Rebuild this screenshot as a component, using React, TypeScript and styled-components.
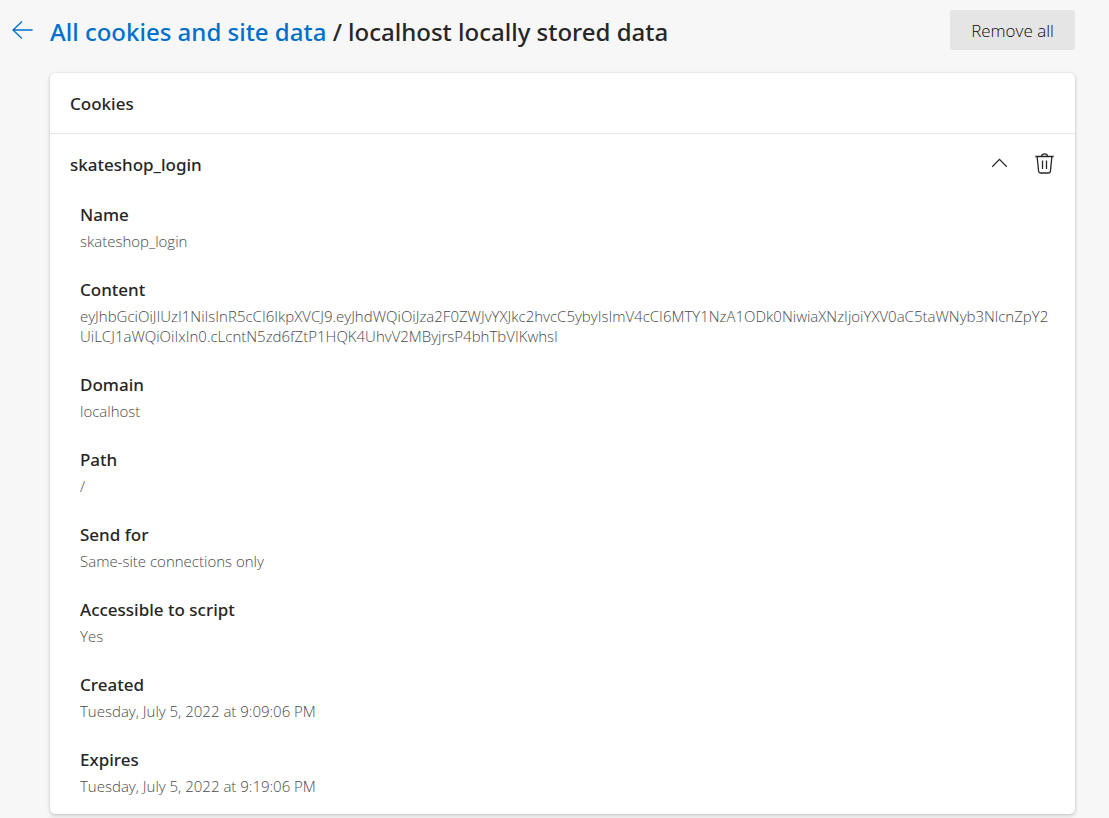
import React from 'react';
import styled, { createGlobalStyle } from 'styled-components';

const GlobalStyle = createGlobalStyle`
  *, *::before, *::after { box-sizing: border-box; }
  body {
    margin: 0;
    background: #f7f7f7;
    color: #262626;
    font-family: "Segoe UI", "Noto Sans", "Open Sans", sans-serif;
  }
`;

const Page = styled.main`
  padding: 10px 34px 4px 10px;
`;

const Header = styled.header`
  display: flex;
  align-items: center;
  height: 40px;
  margin-bottom: 23px;
`;

const BackLink = styled.a`
  display: flex;
  width: 40px;
  color: #0070cc;
`;

const Title = styled.h1`
  flex: 1;
  margin: 0;
  font-size: 24px;
  line-height: 32px;
  font-weight: 500;
  padding-top: 3px;
  white-space: nowrap;
`;

const TitleLink = styled.a`
  color: #0070cc;
  text-decoration: none;
`;

const RemoveButton = styled.button`
  height: 40px;
  min-width: 125px;
  padding: 2px 20px 0;
  border: 0;
  border-radius: 2px;
  background: #e5e5e5;
  color: #0a0a0a;
  font-family: "Segoe UI", "Open Sans", sans-serif;
  font-size: 17px;
  font-weight: 300;
  line-height: 24px;
`;

const Card = styled.section`
  margin-left: 40px;
  border-radius: 5px;
  background: #fff;
  box-shadow: 0 0 2px rgba(0, 0, 0, 0.14), 0 2px 4px rgba(0, 0, 0, 0.16);
`;

const CardHeading = styled.h2`
  margin: 0;
  padding: 19px 20px 17px;
  border-bottom: 1px solid #e8e8e8;
  font-size: 17px;
  line-height: 24px;
  font-weight: 500;
`;

const CookieRow = styled.div`
  display: flex;
  align-items: center;
  height: 60px;
  padding: 0 10px 0 20px;
`;

const CookieName = styled.h3`
  flex: 1;
  margin: 0;
  padding-top: 2px;
  font-size: 17px;
  line-height: 24px;
  font-weight: 500;
`;

const IconButton = styled.button`
  display: flex;
  align-items: center;
  justify-content: center;
  width: 40px;
  height: 40px;
  margin-left: 5px;
  padding: 0;
  border: 0;
  background: none;
  color: #262626;
`;

const Details = styled.dl`
  display: grid;
  gap: 27px;
  margin: 0;
  padding: 9px 20px 18px 30px;
`;

const Label = styled.dt`
  font-size: 17px;
  line-height: 24px;
  font-weight: 500;
`;

const Value = styled.dd`
  margin: 4px 0 0;
  color: #4a4a4a;
  font-family: "Segoe UI", "Open Sans", sans-serif;
  font-size: 15px;
  font-weight: 300;
  line-height: 20px;
  word-break: break-all;
`;

const fields = [
  { label: 'Name', value: 'skateshop_login' },
  {
    label: 'Content',
    value:
      'eyJhbGciOiJIUzI1NiIsInR5cCI6IkpXVCJ9.eyJhdWQiOiJza2F0ZWJvYXJkc2hvcC5ybyIsImV4cCI6MTY1NzA1ODk0NiwiaXNzIjoiYXV0aC5taWNyb3NlcnZpY2UiLCJ1aWQiOiIxIn0.cLcntN5zd6fZtP1HQK4UhvV2MByjrsP4bhTbVIKwhsI',
  },
  { label: 'Domain', value: 'localhost' },
  { label: 'Path', value: '/' },
  { label: 'Send for', value: 'Same-site connections only' },
  { label: 'Accessible to script', value: 'Yes' },
  { label: 'Created', value: 'Tuesday, July 5, 2022 at 9:09:06 PM' },
  { label: 'Expires', value: 'Tuesday, July 5, 2022 at 9:19:06 PM' },
];

const BackIcon = () => (
  <svg width="24" height="20" viewBox="0 0 24 20" fill="none" stroke="currentColor" strokeWidth="1.3" aria-hidden="true">
    <path d="M22.6 10H3M12 1.5L3 10L12 18.5" />
  </svg>
);

const ChevronUpIcon = () => (
  <svg width="16" height="12" viewBox="0 0 16 12" fill="none" stroke="currentColor" strokeWidth="1.3" aria-hidden="true">
    <path d="M0.2 8.8L7.5 1.4L14.8 8.8" />
  </svg>
);

const TrashIcon = () => (
  <svg width="20" height="22" viewBox="0 0 20 22" fill="none" stroke="currentColor" strokeWidth="1.3" aria-hidden="true">
    <path d="M0.3 3.5H18.7M6.5 3.5C6.5 -0.1 12.5 -0.1 12.5 3.5M2.1 3.5L3.6 18.3Q3.8 20 5.5 20H13.5Q15.2 20 15.4 18.3L16.9 3.5M7.5 7.5V16M11.5 7.5V16" />
  </svg>
);

export default function App() {
  return (
    <>
      <GlobalStyle />
      <Page>
        <Header>
          <BackLink href="#cookies" aria-label="Back">
            <BackIcon />
          </BackLink>
          <Title>
            <TitleLink href="#cookies">All cookies and site data</TitleLink> / localhost locally stored data
          </Title>
          <RemoveButton type="button">Remove all</RemoveButton>
        </Header>
        <Card>
          <CardHeading>Cookies</CardHeading>
          <CookieRow>
            <CookieName>skateshop_login</CookieName>
            <IconButton type="button" aria-label="Collapse" aria-expanded="true">
              <ChevronUpIcon />
            </IconButton>
            <IconButton type="button" aria-label="Remove">
              <TrashIcon />
            </IconButton>
          </CookieRow>
          <Details>
            {fields.map(({ label, value }) => (
              <div key={label}>
                <Label>{label}</Label>
                <Value>{value}</Value>
              </div>
            ))}
          </Details>
        </Card>
      </Page>
    </>
  );
}
